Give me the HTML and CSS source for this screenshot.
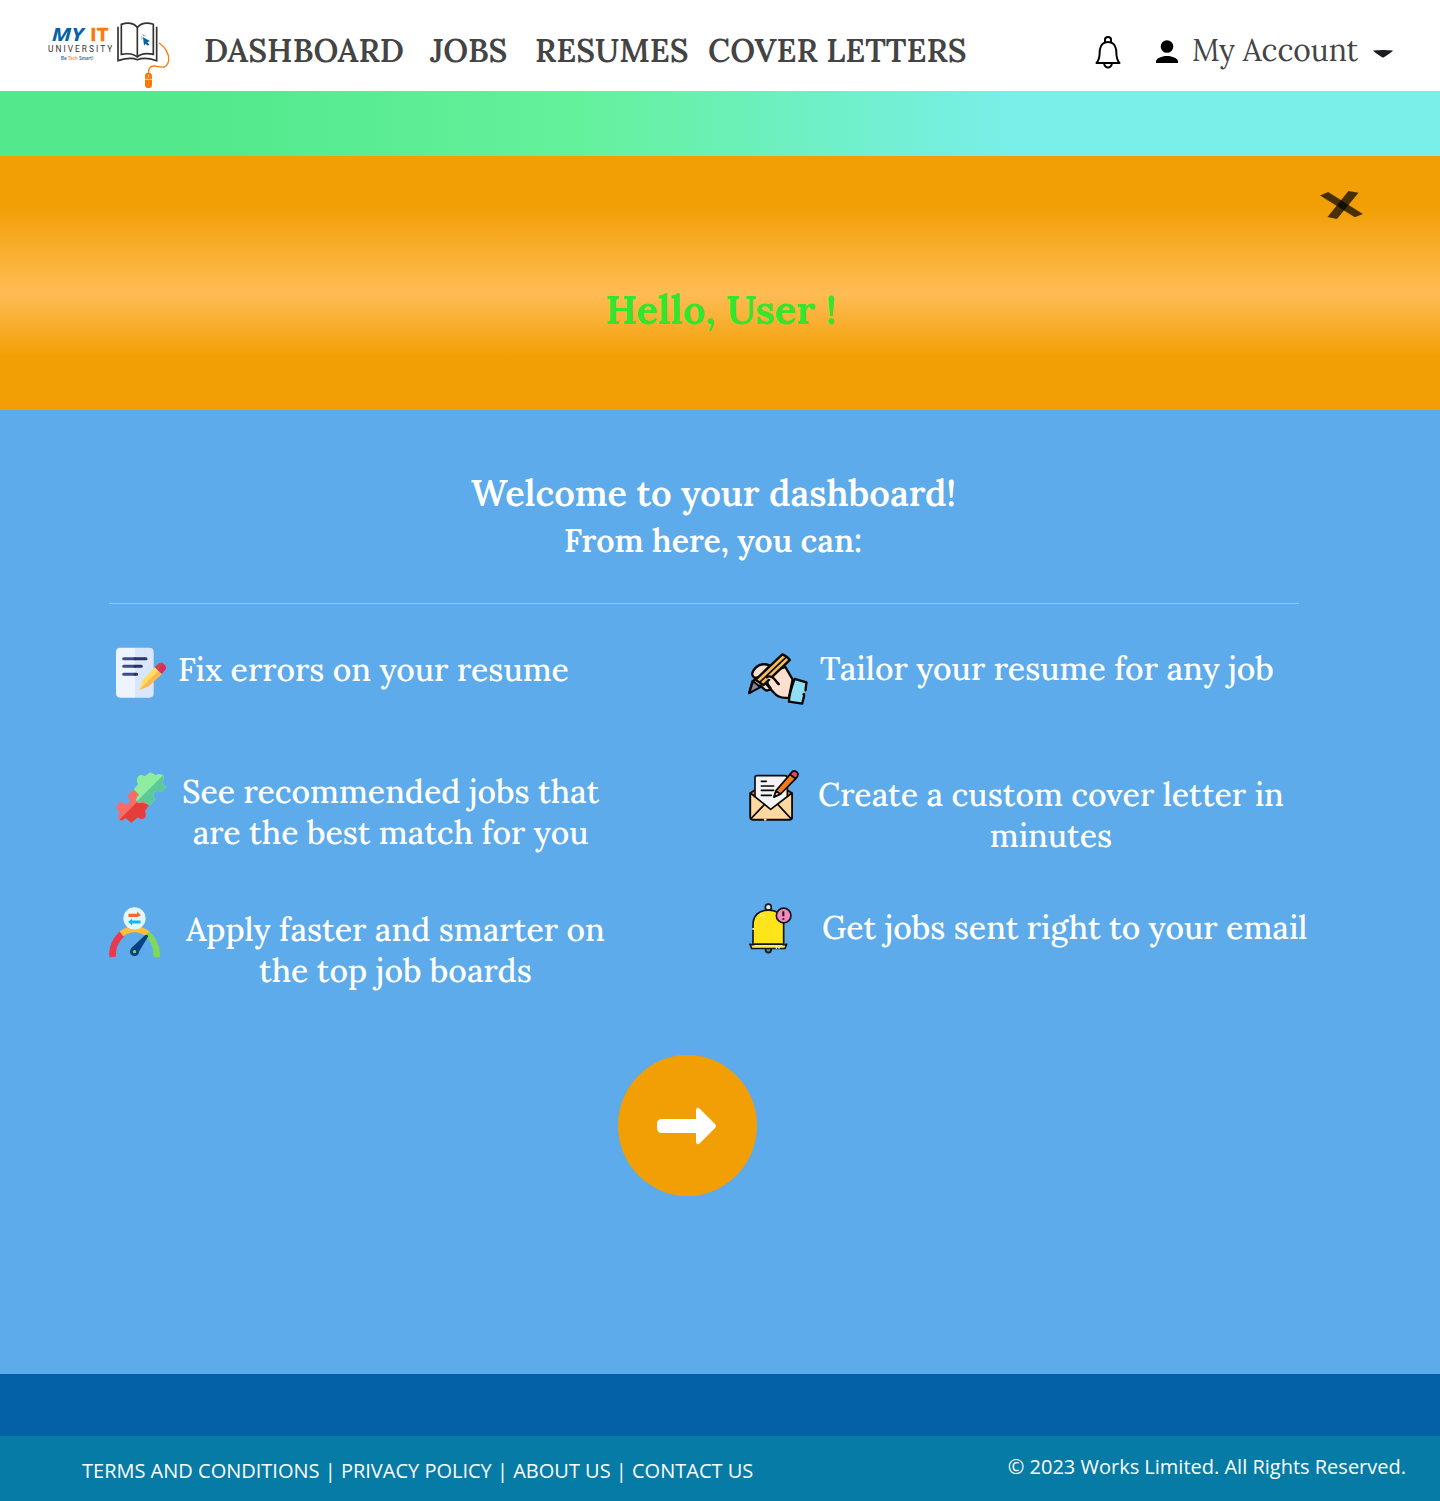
FILE: index.html
```html
<!DOCTYPE html>
<html lang="en">
<head>
<meta charset="utf-8">
<title>Dashboard</title>
<link rel="stylesheet" href="styles.css">
</head>
<body>
<header class="topbar">
  <svg class="logo" viewBox="24 36 366 201" role="img" aria-label="My IT University">
    <g font-family="Open Sans, sans-serif" font-weight="700" font-size="55">
      <text x="35" y="92" fill="#0762a5" font-style="italic" textLength="96" lengthAdjust="spacingAndGlyphs">MY</text>
      <text x="150" y="92" fill="#f9790b" stroke="#f9790b" stroke-width="1" textLength="55" lengthAdjust="spacingAndGlyphs">IT</text>
    </g>
    <text x="24" y="127" font-family="Roboto, sans-serif" font-size="25" fill="#333" textLength="193">UNIVERSITY</text>
    <g font-family="Lato, sans-serif" font-weight="700" font-size="15">
      <text x="62" y="149" fill="#2d76ad" textLength="18" lengthAdjust="spacingAndGlyphs">Be</text>
      <text x="84" y="149" fill="#f99a4b" textLength="29" lengthAdjust="spacingAndGlyphs">Tech</text>
      <text x="117" y="149" fill="#2d76ad" textLength="43" lengthAdjust="spacingAndGlyphs">Smart!</text>
    </g>
    <g fill="none" stroke="#333" stroke-width="5">
      <path d="M244 133V43Q275 33 292 52Q310 33 340 43V133Q307 126 292 141Q275 127 244 133Z"/>
      <path d="M292 52V139"/>
      <path d="M234 50V152Q272 140 292 149Q315 140 350 152V50" stroke-width="5"/>
    </g>
    <path d="M309 82L330 93L322 97L328 104L323 107L317 101L312 107Z" fill="#0762a5"/>
    <path d="M303 80L307 82M304 87L308 86M309 73L311 78M316 75L314 79" stroke="#0762a5" stroke-width="2"/>
    <path d="M357 99C375 110 388 132 386 150C382 178 365 172 344 168C330 167 325 177 325 190" fill="none" stroke="#f9790b" stroke-width="4"/>
    <rect x="315" y="188" width="21" height="46" rx="10" fill="#f9790b"/>
    <path d="M315 208H336M325.500 194V202" stroke="#fff" stroke-width="2"/>
  </svg>
  <nav class="nav">
    <a class="nav-dashboard">DASHBOARD</a>
    <a class="nav-jobs">JOBS</a>
    <a class="nav-resumes">RESUMES</a>
    <a class="nav-letters">COVER LETTERS</a>
  </nav>
  <div class="account">
    <svg class="bell" viewBox="0 0 26 33" fill="none" stroke="#000" stroke-width="2">
      <path d="M1.500 27H24.500C20 22 22 17 21 13C20 8 17 6 13 6S6 8 5 13C4 17 6 22 1.500 27Z" stroke-linejoin="round"/>
      <path d="M10 6V3.500Q10 1 13 1T16 3.500V6M9 27.500Q10 31.500 13 31.500T17 27.500"/>
    </svg>
    <svg class="person" viewBox="0 0 22 23"><circle cx="11" cy="6.500" r="6.300"/><path d="M0 23V20.500C4 14.500 18 14.500 22 20.500V23Z"/></svg>
    <span class="account-name">My Account</span>
    <svg class="caret" viewBox="0 0 20 8"><path d="M0 .5Q10 -.3 20 .5Q20 1.500 10.500 7.500H9.500Q0 1.500 0 .5Z" fill="#1d1b20"/></svg>
  </div>
</header>
<div class="ribbon"></div>
<section class="banner">
  <svg class="close" viewBox="61 63 127 83" fill="#000" fill-opacity=".7"><path d="M61 76L85 66L188 131L164 141Z"/><path d="M145 63L175 68L111 146L83 140Z"/></svg>
  <h1 class="hello">Hello, User !</h1>
</section>
<main class="main">
  <h2 class="welcome">Welcome to your dashboard!</h2>
  <p class="from-here">From here, you can:</p>
  <hr class="divider">
  <div class="features">
    <div class="feature fix">
      <svg class="icon" viewBox="48 36 150 153">
        <path d="M61 38H105V188H61Q48 188 48 175V51Q48 38 61 38Z" fill="#edf3ff"/>
        <path d="M105 38H148Q161 38 161 51V175Q161 188 148 188H105Z" fill="#dae6fd"/>
        <path d="M71 71H105M71 94H105M71 118H105" stroke="#3d4b91" stroke-width="9" stroke-linecap="round"/>
        <path d="M105 71H138M105 94H124M105 118H110" stroke="#293462" stroke-width="9" stroke-linecap="round"/>
        <path d="M165 96L185 117L147 153L118 165L128 134Z" fill="#ffdc64"/><path d="M175 107L185 117L147 153L118 165Z" fill="#ffb64c"/>
        <path d="M165 96L176 86Q185 79 194 89Q202 98 195 106L185 117Z" fill="#dc2d5c"/><path d="M165 96L176 86Q181 82 187 84L174 106Z" fill="#cd4353"/>
      </svg>
      <p>Fix errors on your resume</p>
    </div>
    <div class="feature tailor">
      <svg class="icon" viewBox="24 38 180 157" stroke="#060606" stroke-width="8" stroke-linejoin="round" stroke-linecap="round">
        <path d="M27 159L37 123L57 110L90 76Q64 65 46 83Q29 101 41 111Q50 116 74 102L136 80L158 118L147 173Q116 177 101 157L77 130L88 105Q104 120 116 132L101 115Q84 104 80 120Q82 135 92 145Q82 156 72 147L60 136Z" fill="#ffdfd0" stroke-width="7"/>
        <path d="M46 119L127 42Q138 45 150 59L70 135Z" fill="#f6bd54" stroke-width="7"/><path d="M58 127L138 51" fill="none" stroke-width="5"/>
        <path d="M27 159L39 123L61 141Z" fill="#85869a" stroke-width="6"/>
        <path d="M80 112Q88 104 101 115L116 132" fill="#ffdfd0" stroke-width="6"/>
        <path d="M197 151L200 127L164 116Q147 163 147 185L187 191L193 167" fill="#91def5" stroke-width="7"/>
        <path d="M192 162V163"/>
      </svg>
      <p>Tailor your resume for any job</p>
    </div>
    <div class="feature recommended">
      <svg class="icon" viewBox="48 38 150 152">
        <path d="M48 141L62 127Q77 139 85 132Q96 122 81 110L101 89L148 136L135 154Q139 164 136 173Q127 183 113 174L94 190L75 175Q70 189 57 181Q51 175 59 162Z" fill="#f66d65"/>
        <path d="M59 180L112 127L148 136L135 154Q139 164 136 173Q127 183 113 174L94 190L75 175Q68 187 59 180Z" fill="#e53d3a"/>
        <path d="M101 89L114 75Q106 61 115 50Q123 43 134 50L151 38L168 47Q178 40 190 48Q195 57 186 69L198 83L184 98Q171 91 163 98Q157 107 166 120L148 139L129 123Q119 136 110 126Q105 116 117 106Z" fill="#8eed9e"/>
        <path d="M110 126L188 49Q195 57 186 69L198 83L184 98Q171 91 163 98Q157 107 166 120L148 139L129 123Q119 135 110 126Z" fill="#5cc99b"/>
      </svg>
      <p>See recommended jobs that<br>are the best match for you</p>
    </div>
    <div class="feature letter">
      <svg class="icon" viewBox="27 29 150 153" stroke="#090909" stroke-width="5" stroke-linejoin="round" stroke-linecap="round">
        <path d="M31 98L44 90H142L156 98V171Q156 178 148 178H39Q31 178 31 171Z" fill="#f27b14"/>
        <path d="M45 145V52Q45 46 51 46H135Q142 46 142 53V140L92 160Z" fill="#f5f4f5"/>
        <path d="M31 98L92 147L156 98V171Q156 178 148 178H39Q31 178 31 171Z" fill="#ffd9a1"/>
        <path d="M33 175L73 133M153 175L114 133M64 63H79M64 77H101M64 90H101M64 105H94" fill="none"/>
        <path d="M102 110L108 91L150 42L167 55L122 101Z" fill="#f47a18"/><path d="M102 110L108 92L121 101Z" fill="#f2cd9f"/>
        <path d="M150 42L157 34Q163 28 172 37Q178 44 167 55Z" fill="#f53e62"/>
        <path d="M74 178H77" stroke="#fff1d7"/>
      </svg>
      <p>Create a custom cover letter in<br>minutes</p>
    </div>
    <div class="feature apply">
      <svg class="icon" viewBox="26 35 152 152">
        <path d="M37 184Q33 144 66 114" stroke="#e83a4e" stroke-width="20" fill="none"/>
        <path d="M63 115Q101 87 142 115" stroke="#ffbe3d" stroke-width="18" fill="none"/>
        <path d="M140 114Q171 144 168 184" stroke="#82d85a" stroke-width="19" fill="none"/>
        <path d="M92 158L133 119Q140 115 143 122L113 172Z" fill="#06427f"/>
        <circle cx="102" cy="168" r="13.500" fill="#06427f"/><circle cx="102" cy="168" r="5" fill="#8ccc56"/>
        <circle cx="102" cy="69" r="33" fill="#e4f7fd"/>
        <path d="M84 55H110V48L121 60L110 65H84Z" fill="#fa642d"/><path d="M120 75H95V70L83 79L95 90V84H120Z" fill="#15b7ee"/>
      </svg>
      <p>Apply faster and smarter on<br>the top job boards</p>
    </div>
    <div class="feature alerts">
      <svg class="icon" viewBox="28 25 129 152" stroke="#101821" stroke-width="5" stroke-linejoin="round">
        <circle cx="86" cy="165" r="8.500" fill="#6f7b83"/><circle cx="86" cy="37" r="9" fill="#e7edf0"/>
        <path d="M40 150V90C40 60 60 46 86 46S132 60 132 90V150Z" fill="#ffe31b"/>
        <path d="M31 148Q38 151 45 148H127Q134 151 141 148L136 161H36Z" fill="#ffed54"/>
        <circle cx="132" cy="62" r="22" fill="#f58abb"/><path d="M131 49V64M131 70V75" stroke-width="6"/>
        <path d="M61 62H65M69 62H74M108 159H112M116 159H120M38 102H43" stroke="#fffbd4"/>
      </svg>
      <p>Get jobs sent right to your email</p>
    </div>
  </div>
  <button class="next" aria-label="Continue">
    <svg viewBox="0 0 60 38"><path d="M5 12H39V3Q40 -1 43 2L58 17Q60 19 58 21L43 36Q40 39 39 35V26H5Q0 26 0 21V17Q0 12 5 12Z" fill="#fff"/></svg>
  </button>
</main>
<div class="band"></div>
<footer class="footer">
  <span class="links">TERMS AND CONDITIONS | PRIVACY POLICY | ABOUT US | CONTACT US</span>
  <span class="copyright">© 2023 Works Limited. All Rights Reserved.</span>
</footer>
</body>
</html>
```

FILE: styles.css
```css
* { box-sizing: border-box; }

body {
  margin: 0;
  font-family: Lora, "Liberation Serif", serif;
  background: #5dabea;
}

h1, h2, p { margin: 0; font-weight: 500; }

svg { display: block; flex: none; }

.topbar {
  display: flex;
  align-items: flex-start;
  height: 91px;
  padding: 22px 47px 0 48px;
  background: #fff;
}

.logo { width: 122px; height: 67px; }

.nav {
  display: flex;
  padding: 8px 0 0 34px;
  font-size: 32px;
  font-weight: 600;
  line-height: 41px;
  color: #444;
  white-space: nowrap;
}

.nav-dashboard { width: 226px; }
.nav-jobs { width: 105px; }
.nav-resumes { width: 173px; }

.account {
  display: flex;
  align-items: flex-start;
  margin-left: auto;
}

.bell { width: 26px; height: 33px; margin: 14px 35px 0 0; }
.person { width: 22px; height: 23px; margin: 18px 14px 0 0; }
.account-name {
  width: 181px;
  padding-top: 8px;
  font-size: 30px;
  line-height: 41px;
  color: #444;
  white-space: nowrap;
}
.caret { width: 20px; height: 8px; margin-top: 28px; }

.ribbon {
  height: 65px;
  background: linear-gradient(90deg, #52e88c 12%, #64f19b 40%, #78efe8 70%);
}

.banner {
  display: flex;
  flex-direction: column;
  height: 254px;
  padding-top: 35px;
  background: linear-gradient(180deg, #f29f05 20%, #ffbc55 54%, #f29f05 79%);
}

.close {
  width: 43px;
  height: 28px;
  margin: 0 77px 0 auto;
}

.hello {
  margin-top: 66px;
  padding-left: 605px;
  font-size: 40px;
  font-weight: 700;
  line-height: 50px;
  color: #35e52d;
}

.main {
  height: 964px;
  padding-top: 60px;
  color: #fff;
}

.welcome {
  padding-left: 471px;
  font-size: 36px;
  font-weight: 600;
  line-height: 46px;
}

.from-here {
  padding: 4px 0 0 564px;
  font-size: 32px;
  font-weight: 600;
  line-height: 41px;
}

.divider {
  width: 1190px;
  height: 1px;
  margin: 42px 0 0 109px;
  border: 0;
  background: #8accf5;
}

.features {
  display: grid;
  grid-template-columns: 639px 1fr;
  grid-template-rows: 122px 135px 154px;
  padding-left: 109px;
  margin-top: 44px;
  font-size: 32px;
  line-height: 41px;
  white-space: nowrap;
}

.feature { display: flex; align-items: flex-start; }
.feature p { text-align: center; }

.fix { padding: 1px 0 0 7px; }
.fix .icon { width: 50px; height: 51px; margin: -2px 12px 0 0; }
.tailor .icon { width: 60px; height: 52px; margin: 5px 12px 0 0; }
.recommended { padding-left: 7px; }
.recommended .icon { width: 50px; height: 51px; margin: 2px 16px 0 0; }
.recommended p { padding-top: 1px; }
.letter { padding-left: 1px; }
.letter .icon { width: 50px; height: 51px; margin-right: 19px; }
.letter p { padding-top: 4px; }
.apply p { padding-top: 4px; }
.apply .icon { width: 51px; height: 51px; margin: 2px 26px 0 0; }
.alerts { padding-left: 1px; }
.alerts .icon { width: 43px; height: 51px; margin: -2px 30px 0 0; }
.alerts p { padding-top: 2px; }

.next {
  display: flex;
  align-items: center;
  justify-content: center;
  width: 139px;
  height: 141px;
  margin: -4px 0 0 618px;
  padding: 0 1px 0 0;
  border: 0;
  border-radius: 50%;
  background: #f29f05;
}
.next svg { width: 60px; height: 38px; }

.band { height: 62px; background: #0460a7; }

.footer {
  display: flex;
  justify-content: space-between;
  height: 65px;
  padding: 17px 34px 0 82px;
  background: #057ba6;
  color: #fff;
  font-family: "Open Sans", sans-serif;
  font-size: 20px;
  line-height: 27px;
  white-space: nowrap;
}
.links { padding-top: 4px; }
```
